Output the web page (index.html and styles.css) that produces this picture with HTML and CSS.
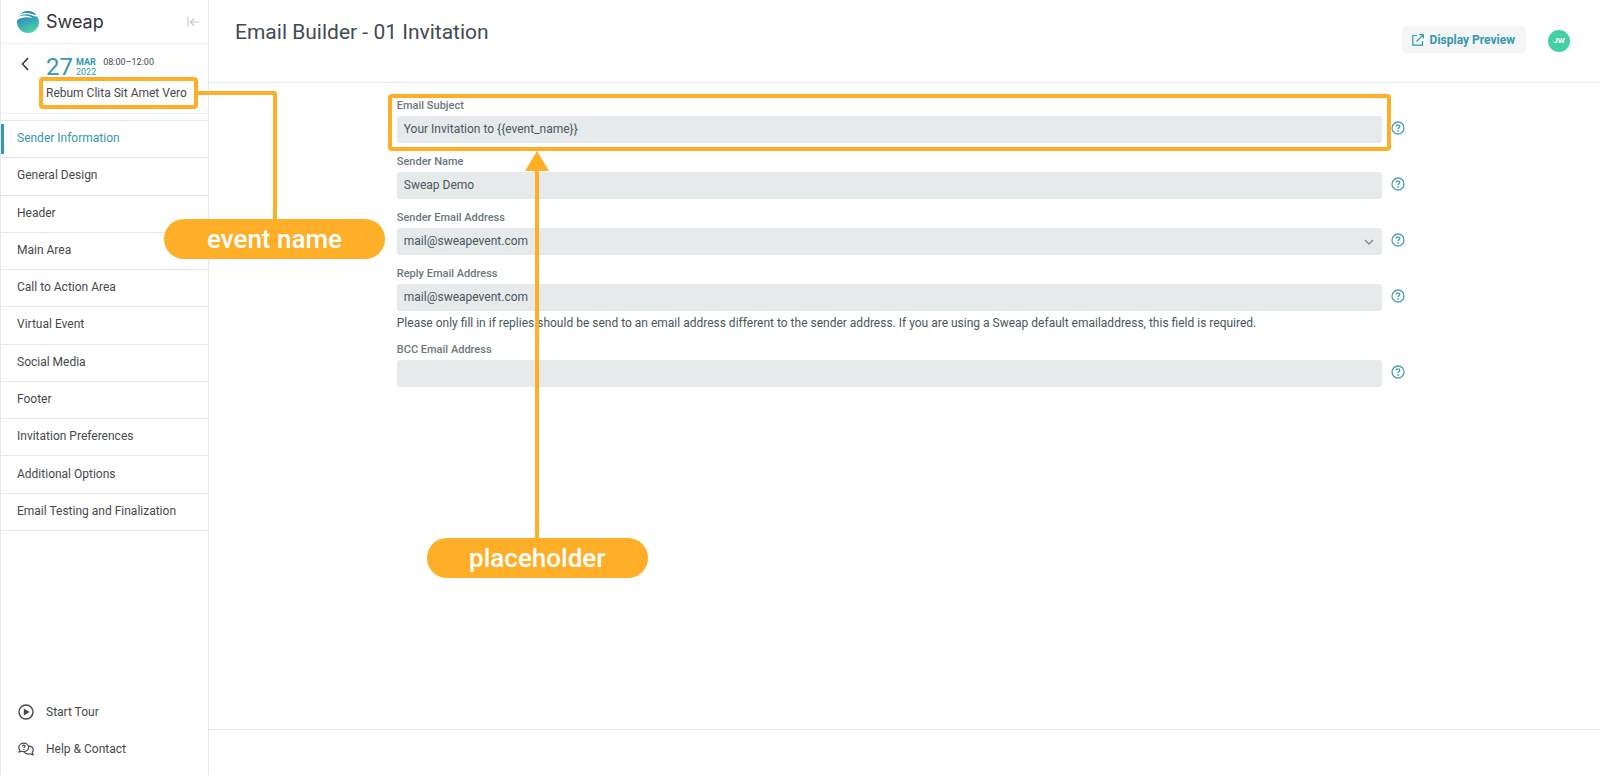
FILE: index.html
```html
<!DOCTYPE html>
<html lang="en">
<head>
<meta charset="utf-8">
<meta name="viewport" content="width=device-width, initial-scale=1">
<title>Email Builder - 01 Invitation</title>
<link rel="stylesheet" href="styles.css">
</head>
<body>
<svg class="defs" aria-hidden="true">
  <symbol id="help" viewBox="0 0 14 14">
    <circle cx="7" cy="7" r="6" fill="none" stroke="currentColor" stroke-width="1.3"/>
    <path d="M5.2 5.6c0-1 .8-1.700 1.800-1.700s1.800.7 1.800 1.600c0 1.200-1.700 1.300-1.700 2.500" fill="none" stroke="currentColor" stroke-width="1.300"/>
    <circle cx="7.1" cy="9.900" r=".9" fill="currentColor"/>
  </symbol>
</svg>
<div class="app">
  <aside class="sidebar">
    <div class="brand">
      <a class="logo" href="#">
        <svg width="22" height="22" viewBox="0 0 22 22" aria-hidden="true">
          <defs><linearGradient id="globe" x1="0" y1="0" x2=".5" y2="1"><stop offset="0" stop-color="#2f86b4"/><stop offset=".5" stop-color="#36a5b5"/><stop offset="1" stop-color="#4bd3a6"/></linearGradient></defs>
          <path d="M3 3.300C5 1.200 8 0 11 0c3.500 0 6.500 1.500 8.500 4C16 3.400 13 1.900 9 1.900 6.500 1.900 4.500 2.500 3 3.300z" fill="#2f86b4"/>
          <path d="M1.600 5.500C5 3.300 9 2.900 12.500 3.800c3 .8 5 2 7.600 1.600C21.300 7 22 9 22 11a11 11 0 0 1-22 0c0-.8.100-1.500.2-2.100C4 6 10 5.600 15.500 6.900 12 4.200 6 3.700 1.600 5.500z" fill="url(#globe)"/>
        </svg>
        <span>Sweap</span>
      </a>
      <button class="icon-btn collapse" aria-label="Collapse menu">
        <svg width="12" height="10" viewBox="0 0 12 10" fill="none" stroke="currentColor" stroke-width="1.200"><path d="M1 0v10M12 5H3.500M7 1.500 3.500 5 7 8.500"/></svg>
      </button>
    </div>
    <div class="event">
      <button class="icon-btn back" aria-label="Back">
        <svg width="8" height="14" viewBox="0 0 8 14" fill="none" stroke="currentColor" stroke-width="1.500"><path d="M7 1 1.500 7 7 13"/></svg>
      </button>
      <div class="event-info">
        <div class="date">
          <span class="day">27</span>
          <span class="month"><b>MAR</b><span>2022</span></span>
          <span class="time">08:00–12:00</span>
        </div>
        <div class="event-name">Rebum Clita Sit Amet Vero
          <div class="mark mark-event"></div>
          <div class="connector"></div>
          <div class="pill pill-event">event name</div>
        </div>
      </div>
    </div>
    <nav class="nav">
      <a class="active" href="#">Sender Information</a>
      <a href="#">General Design</a>
      <a href="#">Header</a>
      <a href="#">Main Area</a>
      <a href="#">Call to Action Area</a>
      <a href="#">Virtual Event</a>
      <a href="#">Social Media</a>
      <a href="#">Footer</a>
      <a href="#">Invitation Preferences</a>
      <a href="#">Additional Options</a>
      <a href="#">Email Testing and Finalization</a>
    </nav>
    <div class="support">
      <a href="#">
        <svg width="16" height="16" viewBox="0 0 16 16" aria-hidden="true"><circle cx="8" cy="8" r="7" fill="none" stroke="currentColor" stroke-width="1.400"/><path d="M5.800 4.500v7L11.500 8z" fill="currentColor"/></svg>
        Start Tour
      </a>
      <a href="#">
        <svg width="16" height="16" viewBox="0 0 16 16" fill="none" stroke="currentColor" stroke-width="1.200" aria-hidden="true"><path d="M1 10.800c.7-.8.900-1.300.7-2C1 8 .8 7.200.8 6.400.8 4 3 2.200 5.700 2.200s4.900 1.800 4.900 4.200-2.200 4.200-4.900 4.200c-.7 0-1.400-.1-2-.4-.8.400-1.700.6-2.700.6z"/><path d="M10.800 5.200c2.500.1 4.400 1.700 4.400 3.800 0 .8-.3 1.600-.9 2.200-.1.800.1 1.600.8 2.400-1.100 0-2-.3-2.800-.8-.6.200-1.200.3-1.900.3-1.900 0-3.500-.9-4.200-2.300"/><path d="M4.300 5.300c0-.8.600-1.200 1.400-1.200s1.400.5 1.400 1.100c0 .9-1.300.9-1.300 1.900M5.800 8v1"/></svg>
        Help &amp; Contact
      </a>
    </div>
  </aside>
  <div class="page">
    <header class="topbar">
      <h1>Email Builder - 01 Invitation</h1>
      <div class="actions">
        <button class="preview">
          <svg width="12" height="12" viewBox="0 0 12 12" fill="none" stroke="currentColor" stroke-width="1.200" aria-hidden="true"><path d="M5 1.500H.8v9.700h9.700V7M7.500.7h3.800v3.800M11.200.8 4.500 7.500"/></svg>
          Display Preview
        </button>
        <button class="avatar" aria-label="Account">JW</button>
      </div>
    </header>
    <main class="content">
      <form class="form">
        <div class="field">
          <label for="subject">Email Subject</label>
          <div class="control"><input id="subject" type="text" value="Your Invitation to {{event_name}}"><button type="button" class="icon-btn help" aria-label="Help"><svg width="14" height="14"><use href="#help"/></svg></button></div>
          <div class="mark mark-subject"></div>
          <div class="arrow"><svg width="24" height="20" viewBox="0 0 24 20" aria-hidden="true"><path d="M12 0l12 20H0z" fill="currentColor"/></svg></div>
          <div class="pill pill-placeholder">placeholder</div>
        </div>
        <div class="field">
          <label for="sender">Sender Name</label>
          <div class="control"><input id="sender" type="text" value="Sweap Demo"><button type="button" class="icon-btn help" aria-label="Help"><svg width="14" height="14"><use href="#help"/></svg></button></div>
        </div>
        <div class="field">
          <label for="address">Sender Email Address</label>
          <div class="control">
            <div class="select"><select id="address"><option>mail@sweapevent.com</option></select><svg width="10" height="6" viewBox="0 0 10 6" fill="none" stroke="currentColor" stroke-width="1.300" aria-hidden="true"><path d="M1 1l4 4 4-4"/></svg></div>
            <button type="button" class="icon-btn help" aria-label="Help"><svg width="14" height="14"><use href="#help"/></svg></button>
          </div>
        </div>
        <div class="field">
          <label for="reply">Reply Email Address</label>
          <div class="control"><input id="reply" type="text" value="mail@sweapevent.com"><button type="button" class="icon-btn help" aria-label="Help"><svg width="14" height="14"><use href="#help"/></svg></button></div>
          <p class="hint">Please only fill in if replies should be send to an email address different to the sender address. If you are using a Sweap default emailaddress, this field is required.</p>
        </div>
        <div class="field">
          <label for="bcc">BCC Email Address</label>
          <div class="control"><input id="bcc" type="text"><button type="button" class="icon-btn help" aria-label="Help"><svg width="14" height="14"><use href="#help"/></svg></button></div>
        </div>
      </form>
    </main>
    <footer class="footer"></footer>
  </div>
</div>
</body>
</html>
```
FILE: styles.css
```css
:root {
  --teal: #3697ae;
  --orange: #ffae27;
  --line: #e4e6e7;
  --field: #e6eaeb;
}
* { box-sizing: border-box; }
body {
  margin: 0;
  font: 12px/16px Roboto, "Liberation Sans", sans-serif;
  color: #45494c;
  background: #fff;
}
a { color: inherit; text-decoration: none; }
button, input, select { font: inherit; color: inherit; border: 0; }
.defs { position: absolute; width: 0; height: 0; }
.app { display: flex; min-height: 100vh; }
.icon-btn { display: flex; padding: 0; background: none; cursor: pointer; }

.sidebar {
  flex: 0 0 209px;
  display: flex;
  flex-direction: column;
  border-left: 1px solid var(--line);
  border-right: 1px solid var(--line);
}
.brand {
  display: flex;
  align-items: center;
  justify-content: space-between;
  height: 44px;
  padding: 0 9px 0 16px;
  border-bottom: 1px solid #eff0f1;
}
.logo { display: flex; align-items: center; gap: 7px; color: #303437; font: 18px/24px Inter, sans-serif; }
.collapse { color: #c9cdcf; }
.event {
  display: flex;
  gap: 17px;
  padding: 12px 0 12px 20px;
  border-bottom: 1px solid #eff0f1;
}
.back { color: #303437; height: 14px; margin-top: 1px; }
.date { display: flex; height: 22px; color: var(--teal); }
.day { font-size: 24px; line-height: 22px; }
.month { display: flex; flex-direction: column; margin-left: 3px; padding-top: 1px; font-size: 9px; line-height: 10px; }
.month b { font-weight: 700; }
.time { margin-left: 7px; color: #45494c; font-size: 9px; line-height: 12px; }
.event-name { position: relative; margin-top: 7px; line-height: 16px; white-space: nowrap; }

.nav {
  display: grid;
  grid-auto-rows: 1fr;
  min-height: 411px;
  margin-top: 6px;
  border-top: 1px solid var(--line);
}
.nav a {
  display: flex;
  align-items: center;
  padding: 0 16px 2px;
  border-bottom: 1px solid var(--line);
}
.nav .active {
  color: var(--teal);
  background: linear-gradient(var(--teal), var(--teal)) left center / 3px 30px no-repeat;
}
.support { display: grid; gap: 21px; margin-top: auto; padding: 0 17px 18px; }
.support a { display: flex; align-items: center; gap: 12px; }

.page { flex: 1; min-width: 0; display: flex; flex-direction: column; }
.topbar {
  display: flex;
  justify-content: space-between;
  height: 83px;
  padding: 19px 30px 0 26px;
  border-bottom: 1px solid #e9ebec;
}
h1 { margin: 0; font-size: 21px; line-height: 26px; font-weight: 400; color: #414b52; }
.actions { display: flex; align-items: center; align-self: flex-start; gap: 22px; padding-top: 7px; }
.preview {
  display: flex;
  align-items: center;
  gap: 6px;
  height: 27px;
  padding: 0 11px 0 10px;
  border-radius: 3px;
  background: #f3f5f6;
  color: var(--teal);
  font-size: 12px;
  font-weight: 700;
}
.avatar {
  width: 22px;
  height: 22px;
  margin-top: 2px;
  padding: 0;
  border-radius: 50%;
  background: #45d0a4;
  color: #fff;
  font-size: 8px;
  font-weight: 700;
}
.content { flex: 1; padding: 16px 14% 16px 13.5%; }
.form { display: grid; gap: 12px; }
.field { position: relative; }
.field label { display: block; margin-bottom: 3px; font-size: 11px; line-height: 14px; font-weight: 500; color: #6b777c; }
.control { display: flex; align-items: center; gap: 9px; }
.control input, .control select {
  flex: 1;
  width: 100%;
  min-width: 0;
  height: 27px;
  padding: 0 7px 2px;
  border-radius: 3px;
  background: var(--field);
  color: #49565c;
  appearance: none;
}
.select { flex: 1; display: grid; align-items: center; }
.select > * { grid-area: 1 / 1; }
.select svg { justify-self: end; margin-right: 8px; color: #7e888c; pointer-events: none; }
.control .help { padding-bottom: 3px; color: #4ba0b0; }
.hint { margin: 4px 0 0; line-height: 16px; color: #49565c; }
.footer { height: 46px; border-top: 1px solid var(--line); }

/* Callouts lying over the page */
.mark, .connector, .arrow, .pill { position: absolute; pointer-events: none; }
.mark { border: 4px solid var(--orange); border-radius: 4px; }
.mark-event { left: -7px; top: -8px; width: 159px; height: 32px; }
.connector {
  left: 152px;
  top: 6px;
  width: 79px;
  height: 128px;
  border: solid var(--orange);
  border-width: 4px 4px 0 0;
  border-top-right-radius: 4px;
}
.pill {
  z-index: 2;
  width: 221px;
  border-radius: 20px;
  background: var(--orange);
  color: #fff;
  font-size: 26px;
  font-weight: 500;
  line-height: 40px;
  text-align: center;
}
.pill-event { left: 118px; top: 134px; }
.mark-subject { left: -9px; right: 14px; top: -5px; height: 57px; }
.arrow {
  z-index: 1;
  left: 128px;
  top: 52px;
  width: 24px;
  height: 388px;
  color: var(--orange);
  background: linear-gradient(var(--orange), var(--orange)) center bottom / 4px 370px no-repeat;
}
.pill-placeholder { left: 30px; top: 439px; }
```
